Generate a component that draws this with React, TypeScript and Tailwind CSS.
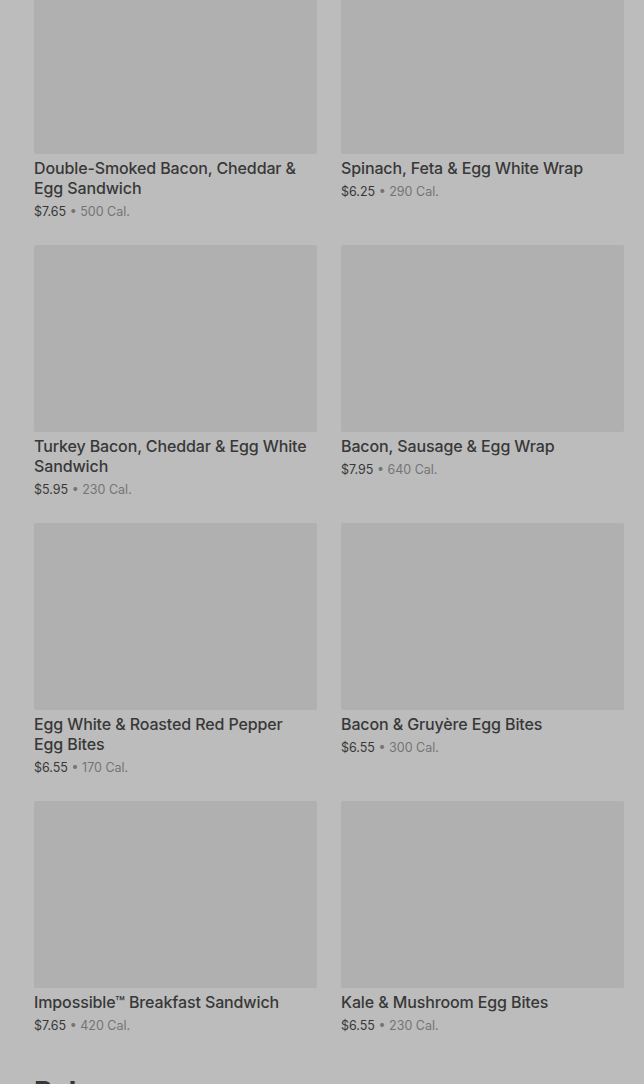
const items = [
  { name: "Double-Smoked Bacon, Cheddar & Egg Sandwich", price: "$7.65", cal: "500 Cal." },
  { name: "Spinach, Feta & Egg White Wrap", price: "$6.25", cal: "290 Cal." },
  { name: "Turkey Bacon, Cheddar & Egg White Sandwich", price: "$5.95", cal: "230 Cal." },
  { name: "Bacon, Sausage & Egg Wrap", price: "$7.95", cal: "640 Cal." },
  { name: "Egg White & Roasted Red Pepper Egg Bites", price: "$6.55", cal: "170 Cal." },
  { name: "Bacon & Gruyère Egg Bites", price: "$6.55", cal: "300 Cal." },
  { name: "Impossible™ Breakfast Sandwich", price: "$7.65", cal: "420 Cal." },
  { name: "Kale & Mushroom Egg Bites", price: "$6.55", cal: "230 Cal." },
];

export default function App() {
  return (
    <div className="h-[1084px] overflow-hidden bg-[#bcbcbc] font-['Inter','Noto_Sans',sans-serif]">
      <div className="pl-[34px] pr-[20px]">
        <div className="-mt-[33px] grid grid-cols-2 gap-x-[24px] gap-y-[23px]">
          {items.map((it) => (
            <div key={it.name} className="flex flex-col">
              <div className="h-[187px] rounded-[2px] bg-[#b0b0b0]" />
              <div className="mt-[4px] pr-[6px] text-[16px] font-medium leading-[20px] tracking-[-0.12px] text-[#383838]">
                {it.name}
              </div>
              <div className="mt-[4px] text-[12.5px] leading-[20px]">
                <span className="text-[#383838]">{it.price}</span>
                <span className="text-[#747474]"> • {it.cal}</span>
              </div>
            </div>
          ))}
        </div>
        <h2 className="mt-[38px] text-[28px] font-bold leading-[36px] text-[#383838]">Bakery</h2>
      </div>
    </div>
  );
}
